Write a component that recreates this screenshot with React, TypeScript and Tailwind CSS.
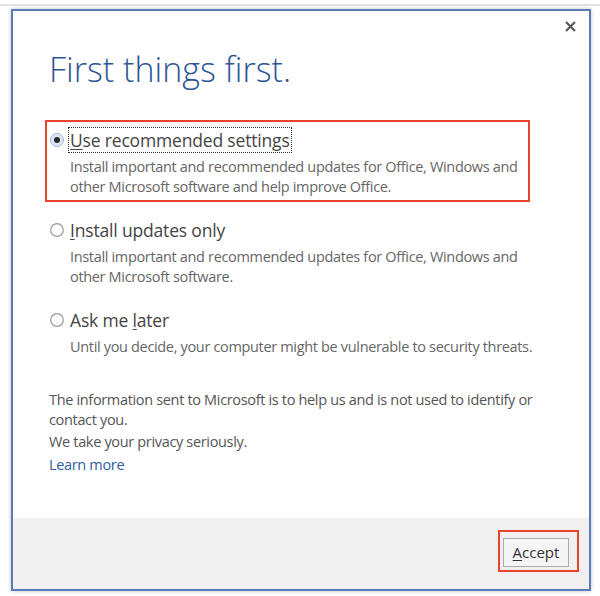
import React from "react";

function Radio({ checked }: { checked?: boolean }) {
  return (
    <svg width="14" height="14" viewBox="0 0 14 14" className="block">
      {checked ? (
        <>
          <circle cx="7" cy="7" r="6.5" fill="#dce6f4" stroke="#9fb6d8" strokeWidth="1" />
          <circle cx="7" cy="7" r="3" fill="#2a2a2a" />
        </>
      ) : (
        <circle cx="7" cy="7" r="6.3" fill="#ffffff" stroke="#9a9a9a" strokeWidth="1.2" />
      )}
    </svg>
  );
}

function Option({
  boxed,
  focused,
  checked,
  label,
  desc,
}: {
  boxed?: boolean;
  focused?: boolean;
  checked?: boolean;
  label: React.ReactNode;
  desc: React.ReactNode;
}) {
  return (
    <div
      className={
        "ml-[32px] w-[485px] border-2 pl-[3px] pt-[5px] pb-[3px] " +
        (boxed ? "border-[#e8432d]" : "border-transparent")
      }
    >
      <div className="flex items-center">
        <div className="w-[14px] flex items-center">
          <Radio checked={checked} />
        </div>
        <span
          className={
            "ml-[4px] inline-block border px-[1px] leading-[24px] text-[17.5px] tracking-[-0.01em] text-[#444444] whitespace-nowrap " +
            (focused ? "border-dotted border-[#333333]" : "border-transparent")
          }
        >
          {label}
        </span>
      </div>
      <div className="mt-[4px] pl-[20px] text-[14.5px] tracking-[-0.023em] leading-[20px] text-[#666666] whitespace-nowrap">
        {desc}
      </div>
    </div>
  );
}

export default function App() {
  return (
    <div className="w-[600px] h-[596px] bg-white overflow-hidden font-['Open_Sans',sans-serif] pt-[4px]">
      <div className="h-[2px] bg-[#e3e3e3]" />
      <div className="mt-[3px] ml-[11px] w-[580px] h-[582px] border-2 border-[#5b7bb8] bg-white flex flex-col shadow-[0_0_4px_rgba(0,0,0,0.25)]">
        <div className="flex-1 relative flex flex-col">
          <svg
            width="11"
            height="11"
            viewBox="0 0 11 11"
            className="absolute top-[10px] right-[13px]"
          >
            <path d="M1 1 L10 10 M10 1 L1 10" stroke="#555555" strokeWidth="2" />
          </svg>
          <h1 className="mt-[34px] ml-[36px] text-[34px] leading-[48px] font-light text-[#2e5597] whitespace-nowrap">
            First things first.
          </h1>
          <div className="mt-[27px]">
            <Option
              boxed
              focused
              checked
              label={
                <>
                  <span className="underline underline-offset-2">U</span>se recommended settings
                </>
              }
              desc={
                <>
                  Install important and recommended updates for Office, Windows and
                  <br />
                  other Microsoft software and help improve Office.
                </>
              }
            />
          </div>
          <div className="mt-[8px]">
            <Option
              label={
                <>
                  <span className="underline underline-offset-2">I</span>nstall updates only
                </>
              }
              desc={
                <>
                  Install important and recommended updates for Office, Windows and
                  <br />
                  other Microsoft software.
                </>
              }
            />
          </div>
          <div className="mt-[8px]">
            <Option
              label={
                <>
                  Ask me <span className="underline underline-offset-2">l</span>ater
                </>
              }
              desc={<>Until you decide, your computer might be vulnerable to security threats.</>}
            />
          </div>
          <div className="mt-[28px] ml-[36px] text-[14.5px] tracking-[-0.023em] leading-[20px] text-[#555555] whitespace-nowrap">
            <p>
              The information sent to Microsoft is to help us and is not used to identify or
              <br />
              contact you.
            </p>
            <p className="mt-[2px]">We take your privacy seriously.</p>
            <p className="mt-[3px] text-[#2e5c9f]">Learn more</p>
          </div>
        </div>
        <div className="h-[71px] bg-[#f0f0f0] flex justify-end items-start pr-[10px] pt-[12px]">
          <div className="border-2 border-[#e8432d] pl-[3px] pt-[6px] pr-[8px] pb-[3px]">
            <button className="w-[66px] h-[29px] border border-[#adadad] bg-[#f5f5f5] text-[15px] text-[#333333] leading-none">
              <span className="underline underline-offset-2">A</span>ccept
            </button>
          </div>
        </div>
      </div>
    </div>
  );
}
